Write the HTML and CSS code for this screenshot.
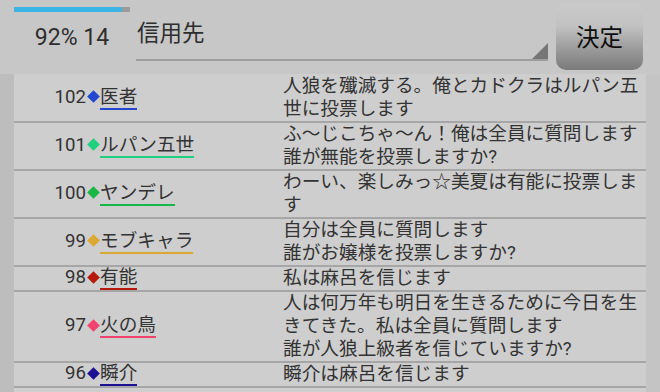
FILE: index.html
```html
<!DOCTYPE html>
<html lang="ja">
<head>
<meta charset="utf-8">
<title>投票</title>
<link rel="stylesheet" href="styles.css">
</head>
<body>
<header class="top">
  <div class="status">
    <div class="progress"><div class="fill" style="width:93%"></div></div>
    <div class="status-text">92% 14</div>
  </div>
  <div class="spinner">信用先</div>
  <button class="decide">決定</button>
</header>
<main class="main">
  <div class="gutter-l"></div>
  <div class="list">
    <div class="row">
      <div class="who"><span class="num">102</span><span class="gem"><i class="c-blue"></i></span><span class="name u-blue">医者</span></div>
      <div class="msg">人狼を殲滅する。俺とカドクラはルパン五世に投票します</div>
    </div>
    <div class="row">
      <div class="who"><span class="num">101</span><span class="gem"><i class="c-mint"></i></span><span class="name u-mint">ルパン五世</span></div>
      <div class="msg">ふ〜じこちゃ〜ん！俺は全員に質問します<br>誰が無能を投票しますか?</div>
    </div>
    <div class="row">
      <div class="who"><span class="num">100</span><span class="gem"><i class="c-green"></i></span><span class="name u-green">ヤンデレ</span></div>
      <div class="msg">わーい、楽しみっ☆美夏は有能に投票します</div>
    </div>
    <div class="row">
      <div class="who"><span class="num">99</span><span class="gem"><i class="c-gold"></i></span><span class="name u-gold">モブキャラ</span></div>
      <div class="msg">自分は全員に質問します<br>誰がお嬢様を投票しますか?</div>
    </div>
    <div class="row">
      <div class="who"><span class="num">98</span><span class="gem"><i class="c-red"></i></span><span class="name u-red">有能</span></div>
      <div class="msg">私は麻呂を信じます</div>
    </div>
    <div class="row">
      <div class="who"><span class="num">97</span><span class="gem"><i class="c-pink"></i></span><span class="name u-pink">火の鳥</span></div>
      <div class="msg">人は何万年も明日を生きるために今日を生きてきた。私は全員に質問します<br>誰が人狼上級者を信じていますか?</div>
    </div>
    <div class="row">
      <div class="who"><span class="num">96</span><span class="gem"><i class="c-navy"></i></span><span class="name u-navy">瞬介</span></div>
      <div class="msg">瞬介は麻呂を信じます</div>
    </div>
  </div>
  <div class="gutter-r"></div>
</main>
</body>
</html>
```

FILE: styles.css
```css
html, body {
  margin: 0;
  padding: 0;
  height: 392px;
  overflow: hidden;
}
body {
  background: #c7c7c7;
  font-family: Roboto, "Noto Sans CJK JP", sans-serif;
  color: #333;
}
.top {
  display: flex;
  height: 74px;
  padding-left: 14px;
  box-sizing: border-box;
}
.status {
  width: 122px;
  display: flex;
  flex-direction: column;
}
.progress {
  margin-top: 7px;
  width: 116px;
  height: 5px;
  background: #9b9b9b;
}
.fill {
  height: 100%;
  background: #3ab4e4;
  border-radius: 2px;
}
.status-text {
  width: 116px;
  margin-top: 13px;
  text-align: center;
  font-size: 23px;
  line-height: 26px;
  color: #2e2e2e;
}
.spinner {
  position: relative;
  width: 412px;
  height: 61px;
  box-sizing: border-box;
  padding: 16px 0 0 1px;
  border-bottom: 2px solid #9d9d9d;
  font-family: "Noto Sans CJK JP", sans-serif;
  font-size: 22.5px;
  line-height: 30px;
  color: #2e2e2e;
}
.spinner::after {
  content: "";
  position: absolute;
  right: 0;
  bottom: 0;
  width: 0;
  height: 0;
  border-left: 16px solid transparent;
  border-bottom: 16px solid #767676;
}
.decide {
  margin: 2px 0 0 8px;
  width: 87px;
  height: 68px;
  border: none;
  border-radius: 10px;
  background: linear-gradient(to bottom, #cacaca 0%, #c2c2c2 35%, #9a9a9a 70%, #7a7a7a 100%);
  font-family: "Noto Sans CJK JP", sans-serif;
  font-size: 23.5px;
  color: #0e0e0e;
  padding: 0;
}
.main {
  display: flex;
  height: 318px;
}
.gutter-l {
  width: 14px;
  background: #bdbdbd;
}
.gutter-r {
  flex: 1;
  background: #c4c4c4;
}
.list {
  width: 632px;
  padding-top: 1px;
  background: #cecece;
}
.row {
  display: flex;
  border-bottom: 2px solid #a6a6a6;
}
.who {
  width: 269px;
  flex: none;
  display: flex;
  align-items: center;
  font-size: 18.67px;
  line-height: 20px;
}
.num {
  width: 72px;
  text-align: right;
  padding-bottom: 3px;
}
.gem {
  width: 14px;
  height: 20px;
  padding-bottom: 3px;
  display: flex;
  justify-content: center;
  align-items: center;
}
.gem i {
  width: 9px;
  height: 9px;
  transform: rotate(45deg);
}
.name {
  padding-bottom: 1px;
  border-bottom: 2px solid;
}
.msg {
  flex: 1;
  font-size: 18.67px;
  line-height: 23px;
}
.c-blue { background: #2347d0; }
.c-mint { background: #1fd07e; }
.c-green { background: #19b747; }
.c-gold { background: #dba832; }
.c-red { background: #b61a0c; }
.c-pink { background: #f2436e; }
.c-navy { background: #1b1191; }
.u-blue { border-color: #2347d0; }
.u-mint { border-color: #1fd07e; }
.u-green { border-color: #19b747; }
.u-gold { border-color: #dba832; }
.u-red { border-color: #b61a0c; }
.u-pink { border-color: #f2436e; }
.u-navy { border-color: #1b1191; }
```
